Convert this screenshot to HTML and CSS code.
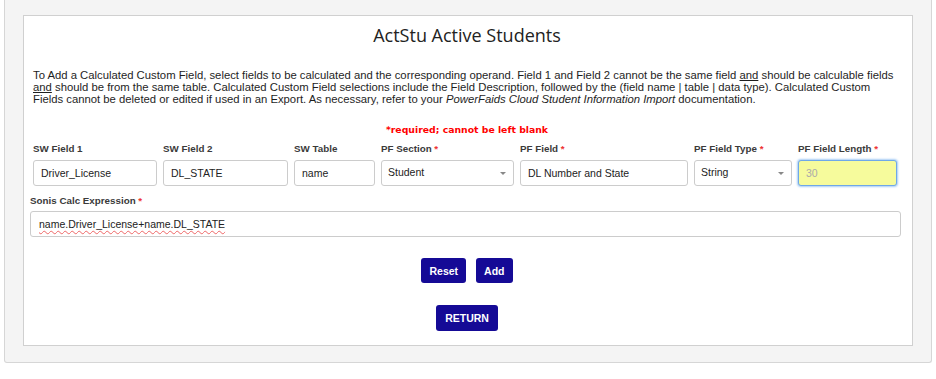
FILE: index.html
```html
<!DOCTYPE html>
<html lang="en">
<head>
    <meta charset="UTF-8">
    <title>ActStu Active Students</title>
    <link rel="stylesheet" href="styles.css">
</head>
<body>
<div class="wrap">
    <div class="panel">
        <h2 class="title">ActStu Active Students</h2>
        <p class="intro">To Add a Calculated Custom Field, select fields to be calculated and the corresponding operand. Field 1 and Field 2 cannot be the same field <u>and</u> should be calculable fields <u>and</u> should be from the same table. Calculated Custom Field selections include the Field Description, followed by the (field name | table | data type). Calculated Custom Fields cannot be deleted or edited if used in an Export. As necessary, refer to your <i>PowerFaids Cloud Student Information Import</i> documentation.</p>
        <div class="required">*required; cannot be left blank</div>

        <div class="fields">
            <div class="fld w1">
                <label>SW Field 1</label>
                <div class="box">Driver_License</div>
            </div>
            <div class="fld w2">
                <label>SW Field 2</label>
                <div class="box">DL_STATE</div>
            </div>
            <div class="fld w3">
                <label>SW Table</label>
                <div class="box">name</div>
            </div>
            <div class="fld w4">
                <label>PF Section <span class="star">*</span></label>
                <div class="box sel">Student<span class="caret"></span></div>
            </div>
            <div class="fld w5">
                <label>PF Field <span class="star">*</span></label>
                <div class="box">DL Number and State</div>
            </div>
            <div class="fld w6">
                <label>PF Field Type <span class="star">*</span></label>
                <div class="box sel">String<span class="caret"></span></div>
            </div>
            <div class="fld w7">
                <label>PF Field Length <span class="star">*</span></label>
                <div class="box focus">30</div>
            </div>
        </div>

        <div class="expr">
            <label>Sonis Calc Expression <span class="star">*</span></label>
            <div class="box"><span class="spell">name.Driver_License+name.DL_STATE</span></div>
        </div>

        <div class="actions">
            <button class="btn">Reset</button>
            <button class="btn">Add</button>
        </div>
        <div class="actions back">
            <button class="btn">RETURN</button>
        </div>
    </div>
</div>
</body>
</html>
```

FILE: styles.css
```css
html,body{
    margin: 0;
    background: #fff;
    font-family: "Liberation Sans", Arial, sans-serif;
}
.wrap{
    margin: 0 4px;
    height: 347px;
    padding: 15px 18px 0;
    background: #f4f4f4;
    border: 1px solid #d6d6d6;
    border-top: none;
    border-radius: 0 0 3px 3px;
}
.panel{
    height: 329px;
    background: #fff;
    border: 1px solid #d0d0d0;
    padding: 0 11px 0 9px;
}
.title{
    margin: 7px 0 0;
    font-family: "Open Sans", sans-serif;
    font-size: 18px;
    font-weight: normal;
    line-height: 24px;
    text-align: center;
    color: #222;
}
.intro{
    margin: 22px 0 0;
    padding-right: 6px;
    font-size: 11.3px;
    line-height: 12px;
    color: #1e1e1e;
}
.intro u{
    text-decoration-thickness: 1px;
}
.required{
    margin-top: 19px;
    text-align: center;
    font-family: "DejaVu Sans", Verdana, sans-serif;
    font-weight: bold;
    font-size: 9.3px;
    line-height: 12px;
    color: #f00;
}
.fields{
    display: flex;
    gap: 6px;
    margin-top: 7px;
}
.fld label,.expr label{
    display: block;
    font-size: 9.8px;
    font-weight: bold;
    line-height: 12px;
    color: #3a3a3a;
    margin-bottom: 5px;
}
.star{
    color: #e33;
}
.box{
    position: relative;
    box-sizing: border-box;
    height: 26px;
    border: 1px solid #ccc;
    border-radius: 3px;
    padding: 0 7px;
    font-size: 10.5px;
    line-height: 24px;
    color: #222;
    background: #fff;
}
.w1{width: 124px;}
.w2{width: 125px;}
.w3{width: 81px;}
.w4{width: 133px;}
.w5{width: 168px;}
.w6{width: 98px;}
.w7{width: 99px;}
.sel{
    padding-left: 6px;
    line-height: 22px;
}
.caret{
    position: absolute;
    right: 7px;
    top: 11px;
    border-left: 3px solid transparent;
    border-right: 3px solid transparent;
    border-top: 3px solid #888;
}
.box.focus{
    background: #f6fb9c;
    border: 1px solid #6fa8e8;
    box-shadow: 0 0 2px 1px #a9cdf5;
    color: #aaa;
}
.expr{
    margin: 9px 0 0 -3px;
}
.expr label{
    margin-bottom: 4px;
}
.expr .box{
    padding-left: 8px;
}
.spell{
    text-decoration: underline wavy #e66;
    text-decoration-thickness: 1px;
    text-underline-offset: 2px;
}
.actions{
    display: flex;
    justify-content: center;
    gap: 10px;
    margin-top: 21px;
}
.actions.back{
    margin-top: 22px;
}
.btn{
    height: 25px;
    padding: 0 8px;
    border: none;
    border-radius: 3px;
    background: #150a96;
    color: #fff;
    font-family: "Liberation Sans", Arial, sans-serif;
    font-size: 10.5px;
    font-weight: bold;
}
.back .btn{
    height: 26px;
    padding: 0 9px;
}
```
